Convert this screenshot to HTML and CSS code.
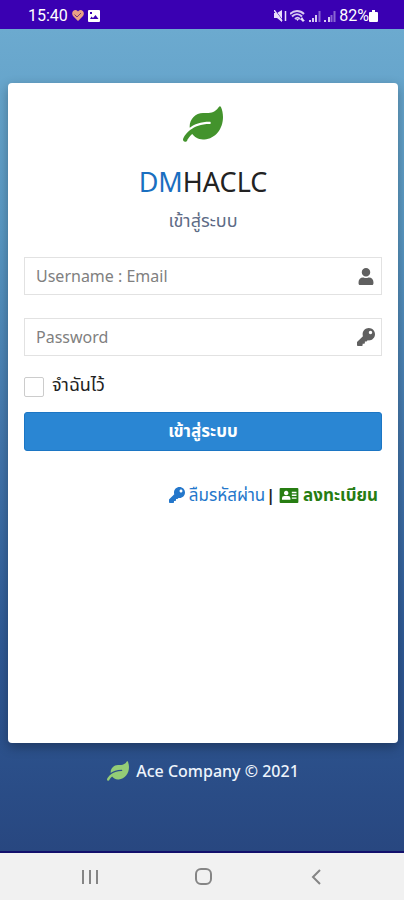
FILE: index.html
```html
<!DOCTYPE html>
<html lang="th">
<head>
<meta charset="UTF-8">
<meta name="viewport" content="width=device-width, initial-scale=1.0">
<title>DMHACLC</title>
<link rel="stylesheet" href="styles.css">
</head>
<body>
<svg class="sprite" aria-hidden="true">
    <symbol id="leaf" viewBox="0 0 576 512"><path d="M546.2 9.7c-5.6-12.5-21.6-13-28.3-1.2C486.9 62.4 431.4 96 368 96h-80C182 96 96 182 96 288c0 7 .8 13.7 1.5 20.5C161.3 262.8 253.4 224 384 224c8.8 0 16 7.2 16 16s-7.2 16-16 16C132.6 256 26 410.1 2.4 468c-6.6 16.3 1.2 34.9 17.5 41.6 16.4 6.8 35-1.1 41.8-17.3 1.5-3.6 20.9-47.9 71.9-90.6 32.4 43.9 94 85.8 174.9 77.2C465.5 467.5 576 326.7 576 154.3c0-50.2-10.8-102.2-29.8-144.6z"/></symbol>
    <symbol id="user" viewBox="0 0 448 512"><path d="M224 256c70.7 0 128-57.3 128-128S294.7 0 224 0 96 57.3 96 128s57.3 128 128 128zm89.6 32h-16.7c-22.2 10.2-46.9 16-72.9 16s-50.6-5.8-72.9-16h-16.7C60.2 288 0 348.2 0 422.4V464c0 26.5 21.5 48 48 48h352c26.5 0 48-21.5 48-48v-41.6c0-74.2-60.2-134.4-134.4-134.4z"/></symbol>
    <symbol id="key" viewBox="0 0 512 512"><path d="M512 176.001C512 273.203 433.202 352 336 352c-11.22 0-22.19-1.062-32.827-3.069l-24.012 27.014A23.999 23.999 0 0 1 261.223 384H224v40c0 13.255-10.745 24-24 24h-40v40c0 13.255-10.745 24-24 24H24c-13.255 0-24-10.745-24-24v-78.059c0-6.365 2.529-12.47 7.029-16.971l161.802-161.802C163.108 213.814 160 195.271 160 176 160 78.798 238.797.001 335.999 0 433.488-.001 512 78.511 512 176.001zM336 128c0 26.51 21.49 48 48 48s48-21.49 48-48-21.49-48-48-48-48 21.49-48 48z"/></symbol>
    <symbol id="card" viewBox="0 0 20 16"><path fill-rule="evenodd" d="M1 0h18a1 1 0 0 1 1 1v14a1 1 0 0 1-1 1H1a1 1 0 0 1-1-1V1a1 1 0 0 1 1-1zM7 3a2.400 2.400 0 1 0 .01 0zM2.500 12.500h9v-1.500a2.500 2.500 0 0 0-2.500-2.500h-4a2.500 2.500 0 0 0-2.500 2.500zM13 4v1.500h5V4zM13 7v1.500h5V7zM13 10v1.500h5V10z"/></symbol>
</svg>

<header class="status-bar">
    <div class="status-group">
        <span>15:40</span>
        <svg class="heart" viewBox="0 0 12 11"><path fill="#e9a184" d="M6 11L1 6C-1 3 1 0 3.500 0 5 0 6 1.500 6 1.500S7 0 8.500 0C11 0 13 3 11 6z"/><path d="M2.500 4.500l2.500 2.500 4-4" fill="none" stroke="#7b3b78"/></svg>
        <svg class="photo" viewBox="0 0 12 12"><path fill="#fff" fill-rule="evenodd" d="M1 0h10a1 1 0 0 1 1 1v10a1 1 0 0 1-1 1H1a1 1 0 0 1-1-1V1a1 1 0 0 1 1-1zM2 9h8.500L7.500 5 5 8 3.500 6.500zM2 2v2h2V2z"/></svg>
    </div>
    <div class="status-group status-right">
        <svg class="mute" viewBox="0 0 13 12"><path fill="#e9e0fa" d="M0 3h3l5-3v12L3 8H0z"/><path d="M1 0l8 11" stroke="#3a00b2" stroke-width="1"/><path d="M0 0l8 11M11.500 1v10" stroke="#e9e0fa" stroke-width="1.500"/></svg>
        <svg class="wifi" viewBox="0 0 16 12"><path d="M0 4c4-4 10-4 14 0M2 6.500c3-3 7-3 10 0M5 9c2-2 3-2 5 0" fill="none" stroke="#d8c9f2" stroke-width="2"/><path fill="#e9e0fa" d="M6 9h3l-1.500 2zM12 7l2 3h-4zM13 12l-2-2h4z"/></svg>
        <svg class="signal" viewBox="0 0 12 12"><path d="M1 12v-2M4 12V8M7 12V5" stroke="#d8c9f2" stroke-width="2"/><path d="M10.500 12V1" stroke="#8a66d2" stroke-width="2"/></svg>
        <svg class="signal" viewBox="0 0 12 12"><path d="M1 12v-2M5 12V7" stroke="#d8c9f2" stroke-width="2"/><path d="M7.500 12V5M10.500 12V1" stroke="#8a66d2" stroke-width="2"/></svg>
        <span>82%</span>
        <svg class="battery" viewBox="0 0 9 12"><path fill="#fff" d="M3 0h3v2h2a1 1 0 0 1 1 1v8a1 1 0 0 1-1 1H1a1 1 0 0 1-1-1V3a1 1 0 0 1 1-1h2z"/></svg>
    </div>
</header>

<main class="page">
    <form class="login-card">
        <svg class="brand-leaf"><use href="#leaf"/></svg>
        <h1><span>DM</span>HACLC</h1>
        <p class="subtitle">เข้าสู่ระบบ</p>
        <div class="field">
            <input type="text" placeholder="Username : Email" aria-label="Username : Email">
            <svg class="user-icon"><use href="#user"/></svg>
        </div>
        <div class="field">
            <input type="password" placeholder="Password" aria-label="Password">
            <svg class="key-icon"><use href="#key"/></svg>
        </div>
        <label class="remember"><input type="checkbox"><span>จำฉันไว้</span></label>
        <button type="submit" class="login-btn">เข้าสู่ระบบ</button>
        <div class="links">
            <a href="#" class="forgot"><svg><use href="#key"/></svg>ลืมรหัสผ่าน</a>
            <span class="divider">|</span>
            <a href="#" class="register"><svg><use href="#card"/></svg>ลงทะเบียน</a>
        </div>
    </form>
    <footer class="footer"><svg><use href="#leaf"/></svg>Ace Company © 2021</footer>
</main>

<nav class="nav-bar">
    <button type="button" aria-label="Recent"><svg viewBox="0 0 18 18"><path d="M2 2v14M9 2v14M16 2v14"/></svg></button>
    <button type="button" aria-label="Home"><svg viewBox="0 0 18 18"><rect x="2" y="1" width="15" height="15" rx="5"/></svg></button>
    <button type="button" aria-label="Back"><svg viewBox="0 0 18 18"><path d="M13 2L6 9l7 7"/></svg></button>
</nav>
</body>
</html>
```
FILE: styles.css
```css
* {
    box-sizing: border-box;
}
body {
    display: flex;
    flex-direction: column;
    min-height: 100vh;
    margin: 0;
    font-family: "Noto Sans", "Noto Sans Thai", sans-serif;
    font-size: 16px;
    color: #222;
}
.sprite {
    position: absolute;
    width: 0;
    height: 0;
}
svg {
    flex: none;
    fill: currentColor;
}
.status-bar {
    display: flex;
    justify-content: space-between;
    align-items: center;
    height: 29px;
    padding: 2px 26px 0 28px;
    background-color: #3a00b2;
    color: #fff;
    font-family: Roboto, sans-serif;
}
.status-group {
    display: flex;
    align-items: center;
    gap: 4px;
}
.status-right {
    gap: 3px;
}
.status-right span {
    margin-right: -3px;
}
.heart {
    width: 12px;
    height: 11px;
}
.photo,
.signal {
    width: 12px;
    height: 12px;
}
.mute {
    width: 13px;
    height: 12px;
}
.wifi {
    width: 16px;
    height: 12px;
}
.battery {
    width: 9px;
    height: 12px;
}
.page {
    display: flex;
    flex: 1;
    flex-direction: column;
    padding: 54px 6px 0 8px;
    background: linear-gradient(#6caacf, #5998c3 25%, #4377ad 50%, #2f5a96 75%, #284780);
    border-bottom: 2px solid #13106c;
}
.login-card {
    display: flex;
    flex: 1;
    flex-direction: column;
    padding: 23px 16px;
    background-color: #fff;
    border-radius: 4px;
    box-shadow: 0 4px 12px rgba(0, 0, 0, 0.3);
}
.brand-leaf {
    align-self: center;
    width: 40px;
    height: 36px;
    color: #43932c;
}
h1 {
    margin: 20px 0 0;
    font-size: 27px;
    font-weight: 400;
    line-height: 40px;
    text-align: center;
}
h1 span {
    color: #1a6fc0;
}
.subtitle {
    margin: 6px 0 25px;
    font-size: 18px;
    line-height: 24px;
    color: #5d6b86;
    text-align: center;
}
.field {
    display: flex;
    align-items: center;
    height: 38px;
    margin-bottom: 23px;
    padding: 0 6px 0 11px;
    border: 1px solid #e2e2e2;
}
.field input {
    flex: 1;
    min-width: 0;
    padding: 0;
    border: 0;
    outline: 0;
    background: none;
    font: inherit;
}
.field input::placeholder {
    color: #808080;
}
.field svg {
    color: #606060;
}
.user-icon {
    width: 18px;
    height: 17px;
}
.key-icon {
    width: 18px;
    height: 18px;
}
.field + .remember {
    margin-top: -6px;
}
.remember {
    display: flex;
    align-items: center;
    align-self: flex-start;
    gap: 8px;
    height: 24px;
    font-size: 18px;
}
.remember input {
    width: 20px;
    height: 20px;
    margin: 4px 0 0;
    appearance: none;
    border: 1px solid #ccc;
    border-radius: 2px;
    background-color: #fff;
}
.remember input:checked {
    background-color: #2a86d3;
}
.login-btn {
    height: 39px;
    margin-top: 15px;
    padding: 0;
    border: 1px solid #1c76c4;
    border-radius: 3px;
    background-color: #2a86d3;
    color: #fff;
    font: inherit;
    font-size: 17px;
    font-weight: 700;
    cursor: pointer;
}
.links {
    display: flex;
    align-items: center;
    justify-content: flex-end;
    gap: 1px;
    margin-top: 32px;
    padding-right: 4px;
    font-size: 17px;
    line-height: 24px;
}
.links a {
    display: flex;
    align-items: center;
    gap: 4px;
    text-decoration: none;
}
.forgot {
    color: #2477cb;
}
.forgot svg {
    width: 16px;
    height: 16px;
}
.register {
    color: #277d12;
    font-weight: 700;
}
.register svg {
    width: 20px;
    height: 15px;
}
.divider {
    margin-right: 3px;
    font-size: 16px;
    font-weight: 700;
}
.footer {
    display: flex;
    align-items: center;
    justify-content: center;
    gap: 7px;
    height: 108px;
    padding-bottom: 52px;
    color: #edf4fc;
    font-weight: 500;
}
.footer svg {
    width: 22px;
    height: 20px;
    color: #94cd76;
}
.nav-bar {
    display: flex;
    justify-content: space-around;
    align-items: center;
    height: 47px;
    padding: 0 32px 0 34px;
    background-color: #f1f1f1;
}
.nav-bar button {
    display: flex;
    padding: 0;
    border: 0;
    background: none;
    color: #858585;
}
.nav-bar svg {
    width: 18px;
    height: 18px;
    fill: none;
    stroke: currentColor;
    stroke-width: 2;
}
```
